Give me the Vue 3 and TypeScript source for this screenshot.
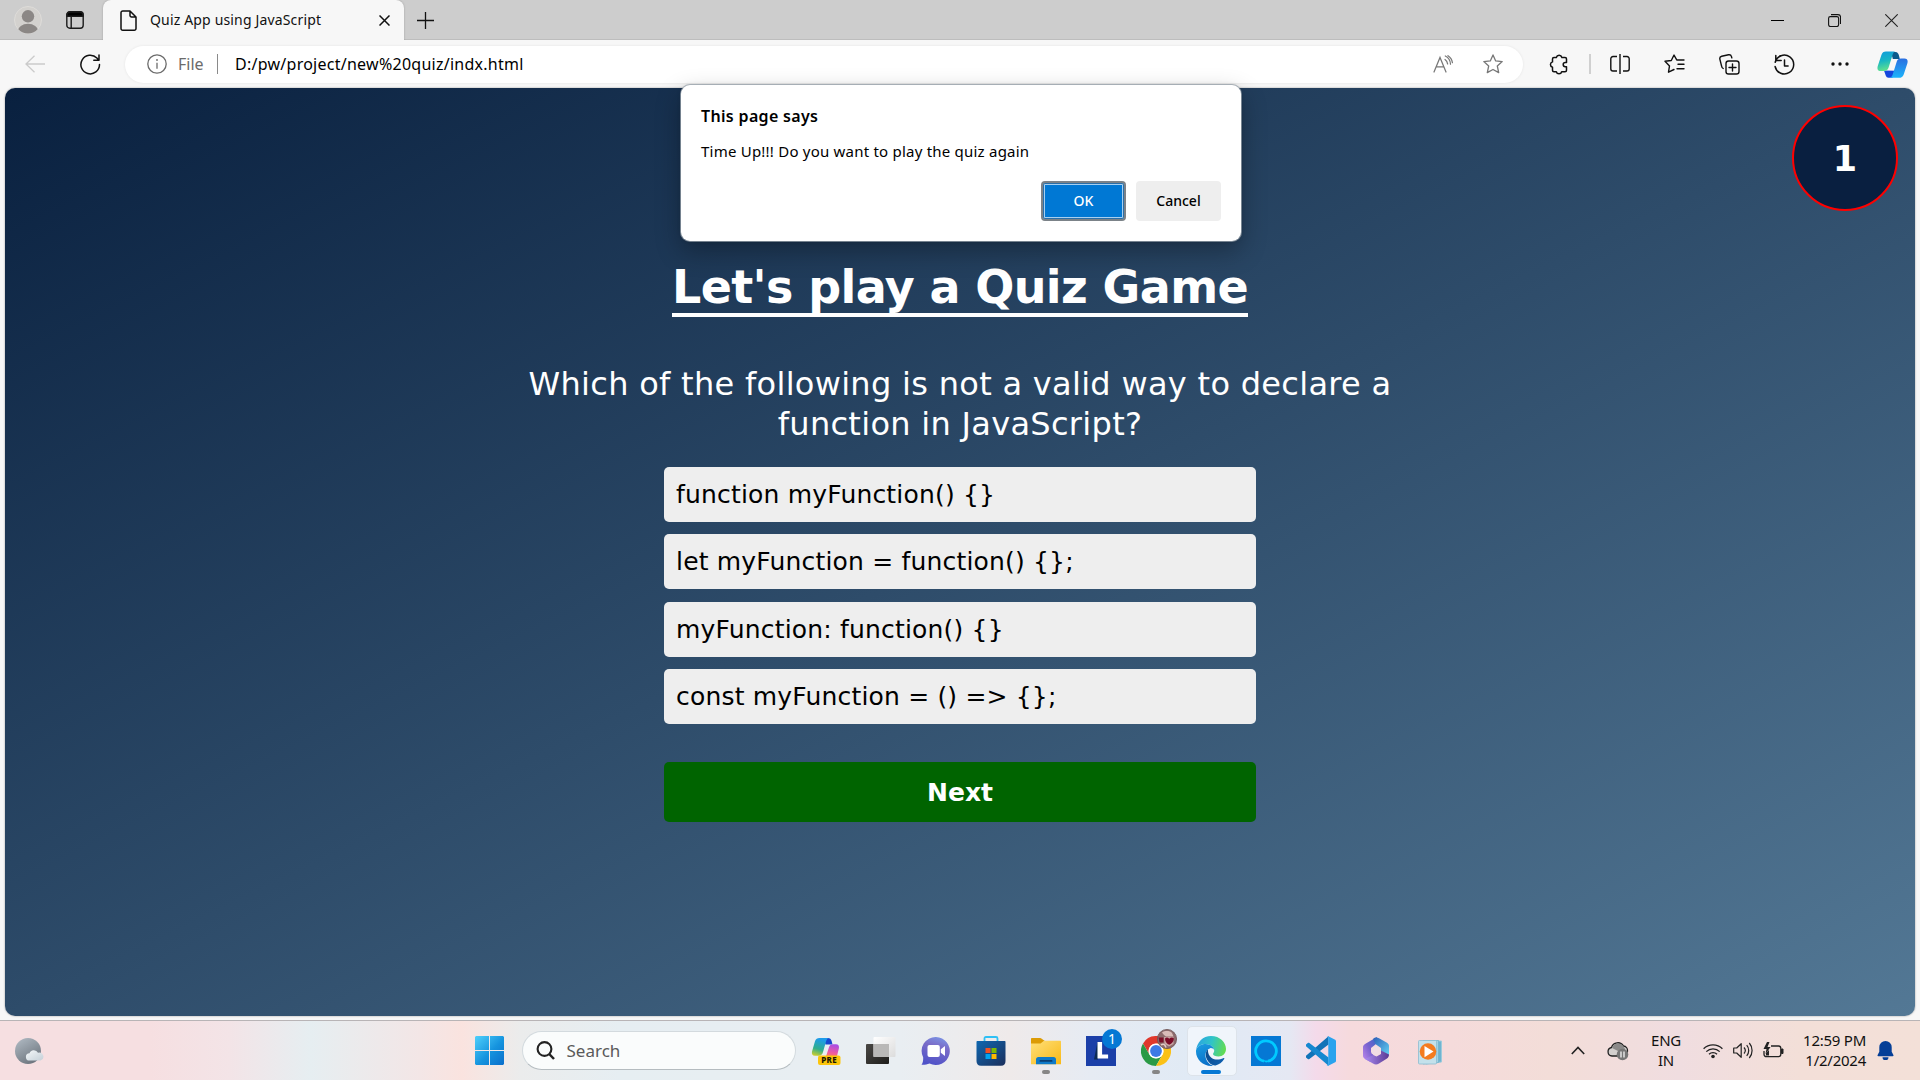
<script setup lang="ts">
import { ref } from 'vue'

const time = ref(1)
const options = ref<string[]>([
  'function myFunction() {}',
  'let myFunction = function() {};',
  'myFunction: function() {}',
  'const myFunction = () => {};',
])
</script>

<template>
  <div class="desktop">
    <header class="titlebar">
      <div class="cell avatar">
        <svg width="28" height="28" viewBox="0 0 28 28">
          <defs><clipPath id="av"><circle cx="14" cy="14" r="13.5" /></clipPath></defs>
          <circle cx="14" cy="14" r="13.5" fill="#d3d1ce" stroke="#dedcd9" />
          <g clip-path="url(#av)" fill="#8b8785"><circle cx="14" cy="10.3" r="6.2" /><ellipse cx="14" cy="25" rx="10.2" ry="7.2" /></g>
        </svg>
      </div>
      <div class="cell workspace">
        <svg width="18" height="18" viewBox="0 0 18 18" fill="none" stroke="#1b1b1b" stroke-width="1.4">
          <rect x=".8" y=".8" width="16.4" height="16.4" rx="3" /><path d="M5.2 5v12" /><path d="M1 3.8A3 3 0 0 1 4 1h10a3 3 0 0 1 3 2.800V5.200H1z" fill="#000" />
        </svg>
      </div>
      <div class="tab">
        <svg class="doc" width="17" height="21" viewBox="0 0 17 21" fill="none" stroke="#111" stroke-width="1.5" stroke-linejoin="round">
          <path d="M3 1h7l6 6v11.500a1.700 1.700 0 0 1-1.700 1.700H2.700A1.700 1.700 0 0 1 1 18.500V2.700A1.700 1.700 0 0 1 2.700 1zM10 1v4.500A1.500 1.500 0 0 0 11.500 7H16" />
        </svg>
        <span class="tab-title">Quiz App using JavaScript</span>
        <svg class="tab-close" width="11" height="11" viewBox="0 0 11 11" stroke="#111" stroke-width="1.5"><path d="M.5.5l10 10M10.500.5l-10 10" /></svg>
      </div>
      <div class="cell plus"><svg width="17" height="17" viewBox="0 0 17 17" stroke="#111" stroke-width="1.3"><path d="M8.500 0v17M0 8.500h17" /></svg></div>
      <div class="grow"></div>
      <div class="cell win"><svg width="13" height="13" viewBox="0 0 13 13" stroke="#000" stroke-width="1"><path d="M0 6.500h13" /></svg></div>
      <div class="cell win"><svg width="13" height="13" viewBox="0 0 13 13" fill="none" stroke="#111" stroke-width="1.100"><rect x=".6" y="2.600" width="10" height="9.900" rx="1.700" /><path d="M3 .6h7a2.500 2.500 0 0 1 2.500 2.500v6.900" /></svg></div>
      <div class="cell win"><svg width="13" height="13" viewBox="0 0 13 13" stroke="#222" stroke-width="1.100"><path d="M.3.3l12.400 12.400M12.700.3L.3 12.700" /></svg></div>
    </header>

    <nav class="toolbar">
      <div class="cell t55 first"><svg width="20" height="18" viewBox="0 0 20 18" fill="none" stroke="#cbcbcb" stroke-width="1.300"><path d="M20 9H1M9.500.7L1 9l8.500 8.300" /></svg></div>
      <div class="cell t55 refresh"><svg width="21" height="21" viewBox="0 0 21 21" fill="none" stroke="#111" stroke-width="1.500" stroke-linecap="round" stroke-linejoin="round"><path d="M19.500 10.500a9.300 9.300 0 1 1-2.600-6.400L18.800 6.200M19 1v5.300h-5.200" /></svg></div>
      <div class="address">
        <svg class="info" width="20" height="20" viewBox="0 0 20 20" fill="none" stroke="#6b6b6b" stroke-width="1.300"><circle cx="10" cy="10" r="9.200" /><path d="M10 8.700v6" /><circle cx="10" cy="6" r=".9" fill="#6b6b6b" stroke="none" /></svg>
        <span class="scheme">File</span>
        <i class="bar"></i>
        <span class="url">D:/pw/project/new%20quiz/indx.html</span>
        <div class="grow"></div>
        <div class="cell t49">
          <svg width="20" height="18" viewBox="0 0 20 18" fill="none" stroke="#777" stroke-width="1.250" stroke-linecap="round"><path d="M1 17L7 2.500 13 17M3.200 11.800h7.600M12 4.500c1.500 1 2.400 2.600 2.600 4.400M12.300 1c3.200 1.500 5 4.500 5.200 8.200M15 .7c2.500 1.600 4 4 4.400 7" /></svg>
        </div>
        <div class="cell t49">
          <svg width="20" height="20" viewBox="0 0 20 20" fill="none" stroke="#777" stroke-width="1.300" stroke-linejoin="round"><path d="M10 .9l2.700 6 6.500.7-4.900 4.400 1.400 6.600L10 15.500l-5.700 3.100L5.700 12 .8 7.600l6.500-.7z" /></svg>
        </div>
      </div>
      <div class="cell ext"><svg width="20" height="21" viewBox="0 0 20 21" fill="none" stroke="#111" stroke-width="1.500" stroke-linejoin="round"><path d="M5 3.500h2.300a2.900 2.900 0 0 1 5.600 0H16a1.500 1.500 0 0 1 1.500 1.500v3.500h-1.200a2.100 2.100 0 0 0 0 4.200h1.200v3.500a1.500 1.500 0 0 1-1.500 1.500h-3.300a2.800 2.800 0 0 1-5.400 0H5a1.500 1.500 0 0 1-1.500-1.500v-2.900a2.800 2.800 0 0 1 0-5.400V5A1.500 1.500 0 0 1 5 3.500z" /></svg></div>
      <i class="split"></i>
      <div class="cell t55 sp"><svg width="20" height="20" viewBox="0 0 20 20" fill="none" stroke="#111" stroke-width="1.400"><path d="M10 0v20M7 2.500H3A2.200 2.200 0 0 0 .8 4.700v10.100A2.200 2.200 0 0 0 3 17h4M13 2.500h4a2.200 2.200 0 0 1 2.200 2.200v10.100A2.200 2.200 0 0 1 17 17h-4" /></svg></div>
      <div class="cell t55"><svg width="21" height="20" viewBox="0 0 21 20" fill="none" stroke="#111" stroke-width="1.400" stroke-linejoin="round" stroke-linecap="round"><path d="M13 5.900l-.3-.1L10 1 7.300 6.500 1 7.300l4.500 4.600-1 6.300L10 15.500M13 6h7M14 10.300h6M13 14.800h7" /></svg></div>
      <div class="cell t55"><svg width="21" height="21" viewBox="0 0 21 21" fill="none" stroke="#111" stroke-width="1.400" stroke-linecap="round"><rect x="7" y="7" width="13" height="13" rx="2.600" /><path d="M13.500 10v7M10 13.500h7M4.200 14.500A3 3 0 0 1 2.600 12L.9 5.300a2.500 2.500 0 0 1 1.800-3L9.500.8a2.600 2.600 0 0 1 3 1.800l.3 1.300" /></svg></div>
      <div class="cell t55"><svg width="21" height="21" viewBox="0 0 21 21" fill="none" stroke="#111" stroke-width="1.500" stroke-linecap="round" stroke-linejoin="round"><path d="M1.200 8.200a9.400 9.400 0 1 1-.1 4.300M1.800 1.500v5h5.400M1.800 6.500C3 4 4.500 2.600 6.500 1.800M10.500 6v6h3.600" /></svg></div>
      <div class="cell t55"><svg width="18" height="4" viewBox="0 0 18 4" fill="#111"><circle cx="2" cy="2" r="1.700" /><circle cx="9" cy="2" r="1.700" /><circle cx="16" cy="2" r="1.700" /></svg></div>
      <div class="cell copilot">
        <svg width="31" height="27" viewBox="0 0 31 27">
          <defs>
            <linearGradient id="c1" x1="0" y1="0" x2=".2" y2="1"><stop offset="0" stop-color="#0f9bdc" /><stop offset=".5" stop-color="#17b5c5" /><stop offset="1" stop-color="#5fe08f" /></linearGradient>
            <linearGradient id="c2" x1="0" y1="0" x2="0" y2="1"><stop offset="0" stop-color="#2b6fe0" /><stop offset="1" stop-color="#1db4fb" /></linearGradient>
          </defs>
          <path d="M14 1h4.500c2 0 2.800 1.500 3.300 3l1 4h-7z" fill="#0a5b8c" />
          <path d="M7 19.500l1.800 5.200c.5 1.300 1.300 2 2.700 2h4l2-7z" fill="#1546dd" />
          <path d="M9 .6h9.500c-1.600.3-2.300 1.400-2.900 3.200l-4 12.800c-.7 2.200-2 3.500-4.300 3.500H3.600C.8 20 0 18 .7 15.200L4.400 4C5.200 1.700 6.600.6 9 .6z" fill="url(#c1)" />
          <path d="M22 26.800h-9.500c1.600-.3 2.600-1.400 3.200-3.200l4-12.800c.7-2.200 2-3.300 4.300-3.300h3.400c2.900 0 3.700 2 3 4.800l-3.700 11.100c-.8 2.300-2.300 3.400-4.700 3.400z" fill="url(#c2)" />
        </svg>
      </div>
    </nav>

    <main class="page">
      <div class="timer">{{ time }}</div>
      <h1>Let's play a Quiz Game</h1>
      <p class="question"><span>Which of the following is not a valid way to declare a</span><br /><span>function in JavaScript?</span></p>
      <ul class="options">
        <li v-for="o in options" :key="o">{{ o }}</li>
      </ul>
      <button class="next">Next</button>
    </main>

    <footer class="taskbar">
      <div class="cell weather">
        <svg width="30" height="28" viewBox="0 0 30 28">
          <defs><linearGradient id="w1" x1="0" y1="0" x2=".6" y2="1"><stop offset="0" stop-color="#b3bdc6" /><stop offset="1" stop-color="#6f7780" /></linearGradient>
          <linearGradient id="w2" x1="0" y1="0" x2="1" y2="1"><stop offset="0" stop-color="#f4f7f9" /><stop offset="1" stop-color="#c5d0d8" /></linearGradient></defs>
          <circle cx="14" cy="14" r="13" fill="url(#w1)" />
          <path d="M15.500 23.500a3.600 3.600 0 0 1 0-7.200 4.600 4.600 0 0 1 8.500-.6 4 4 0 0 1 2.500 7.800z" fill="url(#w2)" />
        </svg>
      </div>
      <div class="cell start">
        <svg width="29" height="29" viewBox="0 0 29 29">
          <defs><linearGradient id="s1" x1="0" y1="0" x2="1" y2="1"><stop offset="0" stop-color="#4fd0fb" /><stop offset=".55" stop-color="#1593de" /><stop offset="1" stop-color="#0a6ecb" /></linearGradient></defs>
          <path d="M1 0h13v14H0V1zM15 0h13l1 1v13H15zM0 15h14v14H1l-1-1zM15 15h14v13l-1 1H15z" fill="url(#s1)" />
        </svg>
      </div>
      <div class="search">
        <svg width="19" height="19" viewBox="0 0 19 19" fill="none" stroke="#222" stroke-width="2.100"><circle cx="8.500" cy="8" r="6.900" /><path d="M13.200 13l4.800 5" stroke-width="2.500" /></svg>
        <span>Search</span>
      </div>
      <div class="cell app">
        <svg width="30" height="30" viewBox="0 0 30 30">
          <defs>
            <linearGradient id="p1" x1=".3" y1="0" x2="0" y2="1"><stop offset="0" stop-color="#1d9bea" /><stop offset=".55" stop-color="#2fae8c" /><stop offset="1" stop-color="#e5d21c" /></linearGradient>
            <linearGradient id="p2" x1=".5" y1="0" x2=".3" y2="1"><stop offset="0" stop-color="#a84de6" /><stop offset=".6" stop-color="#ee5aa0" /><stop offset="1" stop-color="#fb8a52" /></linearGradient>
          </defs>
          <path d="M12 2h5c2 0 3 1 3.600 3l.9 3.500h-7z" fill="#1648cf" />
          <path d="M8.500 2H18c-1.600.3-2.300 1.400-2.800 3L12 16c-.7 2.500-2 3.800-4.200 3.800H4C1.300 19.800.5 18 1 15.500L4 5.300C4.800 3 6.200 2 8.500 2z" fill="url(#p1)" />
          <path d="M14.500 22l3.400-10.500c.7-2.200 2-3.300 4.300-3.300h2.600c2.800 0 3.700 1.900 3 4.600L25.500 22z" fill="url(#p2)" />
          <rect x="7" y="19.500" width="22.500" height="9.500" rx="2" fill="#fdc50a" />
          <text x="18.200" y="27.200" text-anchor="middle" font-family="'Noto Sans', sans-serif" font-weight="800" font-size="8" letter-spacing=".4" fill="#1b1600">PRE</text>
        </svg>
      </div>
      <div class="cell app">
        <svg width="30" height="30" viewBox="0 0 30 30">
          <defs><linearGradient id="t1" x1="0" y1="0" x2="1" y2="1"><stop offset="0" stop-color="#4a4845" /><stop offset="1" stop-color="#1e1d1b" /></linearGradient>
          <linearGradient id="t2" x1="0" y1="0" x2="1" y2="1"><stop offset="0" stop-color="#fff" /><stop offset="1" stop-color="#dcdcdc" /></linearGradient></defs>
          <rect x="0" y="8" width="23" height="20" rx="1" fill="url(#t1)" /><rect x="7.500" y="1" width="22" height="20" rx="1" fill="url(#t2)" /><rect x="7.500" y="8" width="15.500" height="13" fill="#b9b8b7" />
        </svg>
      </div>
      <div class="cell app">
        <svg width="30" height="30" viewBox="0 0 30 30">
          <defs><linearGradient id="h1" x1=".7" y1="0" x2=".4" y2="1"><stop offset="0" stop-color="#7b93e4" /><stop offset=".35" stop-color="#7a6cc8" /><stop offset="1" stop-color="#4f52c8" /></linearGradient></defs>
          <path d="M15 1a14 14 0 1 1-6.500 26.500C6 28.500 3.500 29 .5 28.800 2 27 2.200 24.500 2.200 21.500A14 14 0 0 1 15 1z" fill="url(#h1)" />
          <rect x="6.500" y="9" width="12.300" height="12" rx="2" fill="#fff" /><path d="M19.800 13.200L24 10v10l-4.200-3.200z" fill="#fff" />
        </svg>
      </div>
      <div class="cell app">
        <svg width="30" height="30" viewBox="0 0 30 30">
          <defs><linearGradient id="m1" x1="0" y1="0" x2="1" y2="1"><stop offset="0" stop-color="#0f67b0" /><stop offset="1" stop-color="#1c2f5c" /></linearGradient></defs>
          <path d="M8.500 6V2.500c0-1 .5-1.500 1.500-1.500h10c1 0 1.500.5 1.500 1.500V6" fill="none" stroke="#2fc0f5" stroke-width="1.800" />
          <path d="M.5 6c0-.7.3-1 1-1h27c.7 0 1 .3 1 1v19c0 3-1.500 4.800-4.500 4.800H5C2 29.800.5 28 .5 25z" fill="url(#m1)" />
          <path fill="#f25022" d="M9.500 12h5v5h-5z" /><path fill="#7fba00" d="M15.500 12h5v5h-5z" /><path fill="#00a4ef" d="M9.500 18h5v5h-5z" /><path fill="#ffb900" d="M15.500 18h5v5h-5z" />
        </svg>
      </div>
      <div class="cell app running">
        <svg width="30" height="30" viewBox="0 0 30 30">
          <defs><linearGradient id="f1" x1="0" y1="0" x2="1" y2="1"><stop offset="0" stop-color="#ffe07a" /><stop offset="1" stop-color="#f9b916" /></linearGradient></defs>
          <path d="M0 2.800c0-.5.3-.8.800-.8h8.500c1.500 0 2.700 2.500 4.200 2.500L11 9H0z" fill="#dc9b06" />
          <path d="M0 7.500h9.500L13 4.800h16c.6 0 1 .4 1 1v22.500H0z" fill="url(#f1)" />
          <path d="M5 28.300v-4.800a2.500 2.500 0 0 1 2.500-2.500h15a2.500 2.500 0 0 1 2.500 2.500v4.800z" fill="#0f7ac8" /><rect x="8.500" y="24" width="13" height="1.800" rx=".9" fill="#0a3f73" />
        </svg>
      </div>
      <div class="cell app">
        <svg width="30" height="30" viewBox="0 0 30 30">
          <path fill="#1b3fa8" d="M0 0h30v30H0z" /><path d="M11.500 6l-3.500 17.500 4 0V7z" fill="#0b2a55" /><path d="M11.500 6h4.600v12.500h6v4H11.500z" fill="#fff" />
        </svg>
        <b class="badge">1</b>
      </div>
      <div class="cell app running">
        <svg width="30" height="30" viewBox="0 0 30 30">
          <circle cx="15" cy="15" r="14.500" fill="#fff" />
          <path d="M2 7.500A15 15 0 0 1 28 7.500H15a7.500 7.500 0 0 0-6.500 11.200z" fill="#e0382c" />
          <path d="M2 7.500a15 15 0 0 0 13 22.500l6.500-11.200a7.500 7.500 0 0 1-13 0z" fill="#2a9a46" />
          <path d="M28 7.500A15 15 0 0 1 15 30l6.500-11.200A7.500 7.500 0 0 0 15 7.500z" fill="#fbc116" />
          <circle cx="15" cy="15" r="7.300" fill="#fff" /><circle cx="15" cy="15" r="5.900" fill="#3c79e6" />
        </svg>
        <svg class="mini" width="20" height="20" viewBox="0 0 20 20"><circle cx="10" cy="10" r="9.600" fill="#8d6c6d" stroke="#6d5052" stroke-width=".8" /><path d="M5 3.500c3-2 8-2 10 .5l1.500 3.500H9L7 6z" fill="#d9bcb8" /><path d="M1.500 8.500h5v5h-4z" fill="#7d1029" /><path d="M7 8h9.500v7L12 17.500 7.500 15z" fill="#c9a5a4" /><path d="M8 9.500c1.500-1.500 3-1 4.200.3 1.500-1.500 3.500-1.600 4.700-.3 0 3-2 5-4.700 6.300C9.500 14.500 8 12.500 8 9.500z" fill="#7a0c28" /><path d="M4 16c2-1.500 4-1 5 2.500" stroke="#e3cdc8" stroke-width="1.500" fill="none" /></svg>
      </div>
      <div class="cell app active">
        <svg width="30" height="30" viewBox="0 0 30 30">
          <defs>
            <linearGradient id="e1" x1="0" y1=".3" x2="1" y2=".5"><stop offset="0" stop-color="#2aa3e2" /><stop offset=".5" stop-color="#30c4c8" /><stop offset="1" stop-color="#62dc52" /></linearGradient>
            <linearGradient id="e2" x1=".2" y1="0" x2=".5" y2="1"><stop offset="0" stop-color="#1a9be0" /><stop offset="1" stop-color="#0a6fc8" /></linearGradient>
            <linearGradient id="e3" x1="0" y1="0" x2="1" y2=".6"><stop offset="0" stop-color="#0c4a8a" /><stop offset="1" stop-color="#0f5fae" /></linearGradient>
          </defs>
          <path d="M0 14.500C1 6 7 0 15 0c9 0 15 6.500 15 13 0 4.500-3.300 7.500-7.500 7.500-3 0-5.500-1-5.500-2.500 0-.8 1.200-1.500 1.200-3.500 0-3.500-4-6.500-8.500-6.500C5 8 1 10.500 0 14.500z" fill="url(#e1)" />
          <path d="M0 14.500C1 10.500 5 8 9.700 8c4.500 0 8.300 3 8.500 6-1-1.500-2.700-2.200-4-1.800-3 1-5.200 4.500-4.700 8.300.6 4.500 4 8.500 8 9.300C8 31 0 24 0 15.500z" fill="url(#e2)" />
          <path d="M12 13.500c-2.500 2-3 6-1 10 2 4 5.500 6.300 8.500 6 3.500-.8 6.800-3.200 8.700-6.500.5-.9-.2-1.300-1-.8-3.500 1.800-8.500 2-11.500-.2-2.800-2-4-5-3.700-8.500z" fill="url(#e3)" />
        </svg>
      </div>
      <div class="cell app">
        <svg width="30" height="30" viewBox="0 0 30 30"><path fill="#0578d4" d="M0 0h30v30H0z" /><path d="M13 25.200A10.300 10.300 0 1 1 17 25.200" fill="none" stroke="#00caff" stroke-width="2.800" /><path d="M13 24c2 1 5 .5 6.500-.5l-3 2.800c-1.500.3-3.500 0-3.500-2.300z" fill="#00caff" /></svg>
      </div>
      <div class="cell app">
        <svg width="30" height="30" viewBox="0 0 30 30">
          <path d="M22.500.2L0 19.800c-.6.500-.6 1 0 1.600l1.800 1.600c.5.500 1.100.4 1.600 0L22.500 8.500z" fill="#1173b8" />
          <path d="M22.500 29.800L0 10.200c-.6-.5-.6-1 0-1.600l1.800-1.600c.5-.5 1.100-.4 1.600 0l19.100 14.500z" fill="#1688d0" />
          <path d="M22.300.3l6.400 3.100c.8.4 1.300 1 1.300 1.900v19.400c0 .9-.5 1.500-1.300 1.900l-6.400 3.100c-.7.3-1.500.1-2-.5.8.5 2 0 2-1.200V2c0-1.200-1.200-1.700-2-1.200.5-.6 1.300-.8 2-.5z" fill="#2aa3ee" />
        </svg>
      </div>
      <div class="cell app">
        <svg width="30" height="30" viewBox="0 0 30 30">
          <defs>
            <linearGradient id="o1" x1="1" y1="0" x2="0" y2="1"><stop offset="0" stop-color="#3569c8" /><stop offset=".5" stop-color="#7a62cf" /><stop offset="1" stop-color="#c08bee" /></linearGradient>
            <linearGradient id="o2" x1="0" y1="0" x2="1" y2="1"><stop offset="0" stop-color="#2c5fb8" /><stop offset="1" stop-color="#63d2f3" /></linearGradient>
            <linearGradient id="o3" x1="0" y1="0" x2="1" y2="0"><stop offset="0" stop-color="#a98bf0" /><stop offset="1" stop-color="#5b3a94" /></linearGradient>
          </defs>
          <path d="M16 1L4 8c-1.300.8-2 1.900-2 3.300v8.500c0 1.400.7 2.500 2 3.200l5.500 3 3-7-2.500-3v-4l5-4z" fill="url(#o1)" />
          <path d="M12 3c2-1.800 4-1.800 6-.8l8 4.500c1.300.8 2 1.900 2 3.300v9L20 15v-3l-5-3.500z" fill="url(#o2)" />
          <path d="M4 23l8.500-4 3 1.500L20 18v-3.500l8 4c0 1.500-.6 3.200-2 4l-8 5c-2 1.200-4 1.200-6 0z" fill="url(#o3)" />
          <path d="M15 10l4.500 2.500v5L15 20l-4.500-2.500v-5z" fill="#f1dde4" />
        </svg>
      </div>
      <div class="cell app">
        <svg width="30" height="30" viewBox="0 0 30 30">
          <path d="M10 5h15.500v21L10 28z" fill="#6fb4d0" stroke="#9ccbdc" /><path d="M7 4.500h15.500v22L7 28z" fill="#a3d2e3" stroke="#6fb0cc" stroke-width=".7" /><rect x="2.500" y="4.500" width="18" height="23.500" rx="1" fill="#c3e1eb" stroke="#8bbdd0" stroke-width=".8" />
          <circle cx="12" cy="15.500" r="8.300" fill="#f47c20" /><path d="M8.500 10l9 5.500-9 5.700z" fill="#fff" />
        </svg>
      </div>
      <div class="grow"></div>
      <div class="cell chev"><svg width="14" height="9" viewBox="0 0 14 9" fill="none" stroke="#222" stroke-width="1.600"><path d="M.8 8L7 1.500 13.200 8" /></svg></div>
      <div class="cell cloud">
        <svg width="22" height="20" viewBox="0 0 22 20"><path d="M5 15a4.300 4.300 0 0 1-.5-8.500A6.600 6.600 0 0 1 16.500 5a4.600 4.600 0 0 1 4 5c0 3-1.500 5-4 5z" fill="#d3d0ce" stroke="#222" stroke-width="1.300" /><path d="M6 5c3-4 8-3.500 10.500.5l2 3L13 11 5 7z" fill="#8b8a89" /><circle cx="15.500" cy="13.500" r="5.800" fill="#767676" /><path d="M14 10.500v6M17 10.500v6" stroke="#fff" stroke-width="1.200" /></svg>
      </div>
      <div class="lang"><span>ENG</span><span>IN</span></div>
      <div class="tray">
        <svg width="20" height="16" viewBox="0 0 20 16" fill="none" stroke="#222" stroke-width="1.300"><path d="M.6 5.800a13.200 13.200 0 0 1 18.800 0M3.300 8.600a9.400 9.400 0 0 1 13.400 0M6 11.300a5.700 5.700 0 0 1 8 0" /><circle cx="10" cy="13.500" r="1.800" fill="#222" stroke="none" /></svg>
        <svg width="20" height="17" viewBox="0 0 20 17" fill="none" stroke="#222" stroke-width="1.200" stroke-linejoin="round"><path d="M.7 6h3l4.500-4.300v13.600L3.700 11h-3zM11 5.500a4.500 4.500 0 0 1 0 6M13.700 3.200a8 8 0 0 1 0 10.600M16.300 1a11.500 11.500 0 0 1 0 15" /></svg>
        <svg width="21" height="17" viewBox="0 0 21 17" fill="none" stroke="#222" stroke-width="1.300"><path d="M8 4h7.500A2.300 2.300 0 0 1 17.800 6.300v6a2.300 2.300 0 0 1-2.300 2.300H3.300A2.300 2.300 0 0 1 1 12.300V9" /><path d="M18.500 7h1.500v4.500h-1.500z" fill="#222" stroke-width="1" /><path d="M4 0L.5 7h3L2.500 12l5-7H4.500L6.500 0z" fill="#222" stroke="none" /><path d="M3 13.500V11l3-3v5.500z" fill="#222" stroke="none" /></svg>
      </div>
      <div class="clock"><span>12:59 PM</span><span>1/2/2024</span></div>
      <div class="cell bell"><svg width="17" height="19" viewBox="0 0 17 19" fill="#053f97"><path d="M8.500 0a6.200 6.200 0 0 1 6.200 6.200v4.600l1.700 3.200c.3.700 0 1.200-.8 1.200H1.400c-.8 0-1.100-.5-.8-1.200l1.700-3.200V6.200A6.200 6.200 0 0 1 8.500 0zM5.500 16.300h6a3 3 0 0 1-6 0z" /></svg></div>
    </footer>

    <section class="dialog" role="dialog">
      <h2>This page says</h2>
      <p>Time Up!!! Do you want to play the quiz again</p>
      <div class="actions">
        <button class="ok">OK</button>
        <button class="cancel">Cancel</button>
      </div>
    </section>
  </div>
</template>

<style>
html, body { margin: 0; overflow: hidden; }
</style>

<style scoped>
.desktop { position: relative; width: 1920px; height: 1080px; overflow: hidden; display: flex; flex-direction: column; background: #f7f7f7; font-family: 'Noto Sans', 'Open Sans', sans-serif; color: #111; }
.desktop * { box-sizing: border-box; }
svg { display: block; flex: none; }
span { white-space: nowrap; }
.cell { display: flex; align-items: center; justify-content: center; flex: none; height: 100%; }
.grow { flex: 1; }

.titlebar { height: 40px; flex: none; display: flex; background: #cdcdcd; box-shadow: inset 0 -1px 0 #bdbdbd; }
.avatar { width: 56px; }
.workspace { width: 38px; }
.tab { width: 301px; height: 40px; margin-left: 9px; display: flex; align-items: center; background: #f7f7f7; border-radius: 8px 8px 0 0; box-shadow: 0 0 2px rgba(0, 0, 0, .25); clip-path: inset(0 -4px 0 -4px); padding-left: 17px; }
.tab-title { margin-left: 13px; font-size: 14px; letter-spacing: .16px; width: 217px; padding-bottom: 2px; }
.tab-close { margin-left: 12px; }
.plus { width: 43px; }
.win { width: 57px; }

.toolbar { height: 48px; flex: none; display: flex; align-items: center; }
.t55 { width: 55px; }
.t49 { width: 50px; }
.first { margin-left: 7px; }
.refresh { padding-left: 2px; }
.address { width: 1398px; height: 37px; margin-left: 8px; border-radius: 19px; background: #fff; display: flex; align-items: center; box-shadow: 0 0 3px rgba(0, 0, 0, .08); padding-right: 5px; }
.info { margin-left: 22px; }
.scheme { margin-left: 11px; width: 27px; font-size: 16px; color: #6b6b6b; padding-bottom: 1px; }
.bar { width: 1px; height: 20px; margin-left: 12px; background: #8a8a8a; }
.url { margin-left: 17px; font-size: 16px; letter-spacing: .26px; color: #000; padding-bottom: 1px; }
.ext { width: 54px; margin-left: 9px; }
.split { width: 2px; height: 20px; margin-left: 3px; background: #d0d0d0; }
.sp { margin-left: 1px; }
.copilot { width: 52px; padding-right: 1px; }

.page { position: relative; height: 928px; flex: none; margin: 0 5px; border-radius: 10px; display: flex; flex-direction: column; align-items: center; background: linear-gradient(to bottom right, #09203f 0%, #537895 100%); font-family: 'DejaVu Sans', sans-serif; color: #fff; box-shadow: 0 0 2px rgba(0, 0, 0, .4); }
.timer { position: absolute; right: 17px; top: 17px; width: 106px; height: 106px; border-radius: 50%; border: 2.500px solid #f00; background: #091f40; display: flex; align-items: center; justify-content: center; padding-top: 2px; font-weight: 700; font-size: 35px; }
h1 { margin: 166px 0 0; height: 63px; border-bottom: 4px solid #fff; font-size: 46px; line-height: 66px; letter-spacing: -.62px; white-space: nowrap; font-weight: 700; }
.question { margin: 47px 0 0; text-align: center; font-size: 32px; line-height: 40px; letter-spacing: .3px; }
.options { list-style: none; margin: 23px 0 0; padding: 0; width: 592px; display: flex; flex-direction: column; gap: 12.400px; }
.options li { height: 55px; border-radius: 5px; background: #eee; color: #000; font-size: 25px; line-height: 56px; letter-spacing: .18px; padding-left: 12px; }
.next { width: 592px; height: 60px; margin-top: 38px; border: 0; border-radius: 5px; background: #006400; color: #fff; font: 700 25px 'DejaVu Sans', sans-serif; }

.taskbar { height: 60px; flex: none; margin-top: 4px; border-top: 1px solid #b8b4b6; display: flex; align-items: center; background: linear-gradient(90deg, #f6dfe1 0, #f6dfe1 150px, #f3e4e7 230px, #e6eef1 310px, #f3e6e6 420px, #fae3df 462px, #ebecec 520px, #e6eef2 620px, #e9eef2 900px, #efeaea 1010px, #e6ebf3 1090px, #e0eaf5 1200px, #e5e8f3 1290px, #f4daea 1316px, #f6dadd 1350px, #f5dbdb 1450px, #f3ddd8 1550px, #f0dde0 1680px, #f3dfd8 1800px, #f3e0d8 100%); }
.weather { width: 58px; }
.start { width: 55px; margin-left: 404px; }
.search { width: 274px; height: 39px; margin-left: 4.500px; border-radius: 20px; border: 1px solid #d3dade; border-bottom-color: #b5bcc0; background: #fafcfc; display: flex; align-items: center; padding-left: 13px; font-size: 17px; color: #5a5a5a; }
.search span { margin-left: 12px; }
.app { position: relative; width: 55px; }
.search + .app { margin-left: 2.500px; }
.running::after, .active::after { content: ''; position: absolute; left: 24px; bottom: 6px; width: 8px; height: 4px; border-radius: 2px; background: #868686; }
.active::before { content: ''; position: absolute; left: 3.500px; top: 5px; width: 48px; height: 48px; border-radius: 5px; background: #f0f5fb; border: 1px solid #dde3ea; }
.active svg { position: relative; }
.active::after { left: 17.500px; width: 20px; background: #0578d4; }
.badge { position: absolute; left: 29px; top: 8px; width: 20px; height: 20px; border-radius: 50%; background: #0578d4; color: #fff; font-weight: 400; font-size: 14px; line-height: 20px; text-align: center; }
.mini { position: absolute; left: 29px; top: 8px; }
.chev { width: 44px; }
.cloud { width: 35px; }
.lang, .clock { display: flex; flex-direction: column; font-size: 15px; line-height: 20px; padding-bottom: 2px; }
.lang { width: 62px; align-items: center; letter-spacing: -.3px; }
.tray { display: flex; gap: 10px; align-items: center; margin-left: 6px; }
.clock { align-items: flex-end; width: 82px; letter-spacing: -.25px; }
.bell { width: 54px; padding-right: 15px; }

.dialog { position: absolute; left: 681px; top: 85px; width: 560px; height: 156px; border-radius: 9px; background: #fff; box-shadow: 0 0 0 1px rgba(150, 160, 170, .75), 0 10px 26px rgba(0, 0, 0, .3), 0 0 4px rgba(0, 0, 0, .15); padding: 19px 20px 0 20px; color: #000; }
.dialog h2 { margin: 0; font-size: 16px; line-height: 24px; font-weight: 600; letter-spacing: .33px; }
.dialog p { margin: 12px 0 0; font-size: 15px; line-height: 22px; letter-spacing: .22px; }
.actions { display: flex; justify-content: flex-end; gap: 10px; margin-top: 19px; }
.actions button { width: 85px; height: 40px; border: 0; border-radius: 4px; padding: 0 0 2px; font: 500 14px 'Noto Sans', sans-serif; }
.actions .ok { background: #0078d4; color: #fff; border: 2px solid #7b8288; box-shadow: inset 0 0 0 1px #2b6fa8, inset 0 0 0 2px #a8d0f0; }
.actions .cancel { background: #eee; color: #000; }
</style>
